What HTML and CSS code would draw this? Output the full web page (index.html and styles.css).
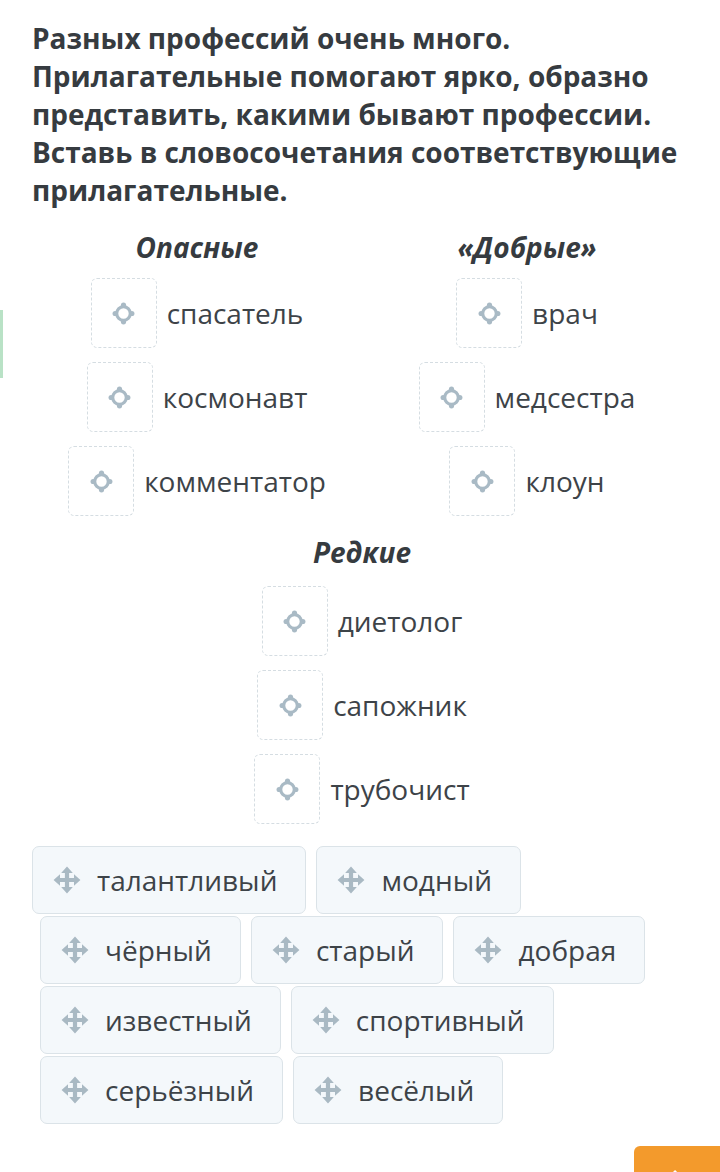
FILE: index.html
```html
<!DOCTYPE html>
<html lang="ru">
<head>
    <meta charset="UTF-8">
    <meta name="viewport" content="width=device-width, initial-scale=1.0">
    <title>Прилагательные</title>
    <link rel="stylesheet" href="styles.css">
</head>
<body>
    <div class="side-mark"></div>
    <main class="task">
        <h1 class="question">Разных профессий очень много. Прилагательные помогают ярко, образно представить, какими бывают профессии. Вставь в словосочетания соответствующие прилагательные.</h1>

        <div class="groups">
            <section class="group">
                <h2>Опасные</h2>
                <div class="row"><span class="drop"><svg class="target" viewBox="0 0 24 24"><use href="#target"/></svg></span><span class="word">спасатель</span></div>
                <div class="row"><span class="drop"><svg class="target" viewBox="0 0 24 24"><use href="#target"/></svg></span><span class="word">космонавт</span></div>
                <div class="row"><span class="drop"><svg class="target" viewBox="0 0 24 24"><use href="#target"/></svg></span><span class="word">комментатор</span></div>
            </section>
            <section class="group">
                <h2>«Добрые»</h2>
                <div class="row"><span class="drop"><svg class="target" viewBox="0 0 24 24"><use href="#target"/></svg></span><span class="word">врач</span></div>
                <div class="row"><span class="drop"><svg class="target" viewBox="0 0 24 24"><use href="#target"/></svg></span><span class="word">медсестра</span></div>
                <div class="row"><span class="drop"><svg class="target" viewBox="0 0 24 24"><use href="#target"/></svg></span><span class="word">клоун</span></div>
            </section>
            <section class="group wide">
                <h2>Редкие</h2>
                <div class="row"><span class="drop"><svg class="target" viewBox="0 0 24 24"><use href="#target"/></svg></span><span class="word">диетолог</span></div>
                <div class="row"><span class="drop"><svg class="target" viewBox="0 0 24 24"><use href="#target"/></svg></span><span class="word">сапожник</span></div>
                <div class="row"><span class="drop"><svg class="target" viewBox="0 0 24 24"><use href="#target"/></svg></span><span class="word">трубочист</span></div>
            </section>
        </div>

        <div class="bank">
            <div class="bank-row first">
                <span class="chip"><svg class="move" viewBox="0 0 24 24"><use href="#move"/></svg>талантливый</span>
                <span class="chip"><svg class="move" viewBox="0 0 24 24"><use href="#move"/></svg>модный</span>
            </div>
            <div class="bank-row">
                <span class="chip"><svg class="move" viewBox="0 0 24 24"><use href="#move"/></svg>чёрный</span>
                <span class="chip"><svg class="move" viewBox="0 0 24 24"><use href="#move"/></svg>старый</span>
                <span class="chip"><svg class="move" viewBox="0 0 24 24"><use href="#move"/></svg>добрая</span>
            </div>
            <div class="bank-row">
                <span class="chip"><svg class="move" viewBox="0 0 24 24"><use href="#move"/></svg>известный</span>
                <span class="chip"><svg class="move" viewBox="0 0 24 24"><use href="#move"/></svg>спортивный</span>
            </div>
            <div class="bank-row">
                <span class="chip"><svg class="move" viewBox="0 0 24 24"><use href="#move"/></svg>серьёзный</span>
                <span class="chip"><svg class="move" viewBox="0 0 24 24"><use href="#move"/></svg>весёлый</span>
            </div>
        </div>

        <div class="footer">
            <button class="next" type="button"><svg viewBox="0 0 24 24"><path d="M9 5l7 7-7 7"/></svg></button>
        </div>
    </main>

    <svg width="0" height="0" style="position:absolute">
        <defs>
            <g id="target">
                <circle cx="12" cy="12" r="6.5" fill="none" stroke="currentColor" stroke-width="3"/>
                <circle cx="12" cy="4" r="2.5" fill="currentColor"/>
                <circle cx="12" cy="20" r="2.5" fill="currentColor"/>
                <circle cx="4" cy="12" r="2.5" fill="currentColor"/>
                <circle cx="20" cy="12" r="2.5" fill="currentColor"/>
            </g>
            <path id="move" d="M12 0.5l5 5.5h-3.2v4.2h4.2v-3.2l5.5 5-5.5 5v-3.2h-4.2v4.2h3.2l-5 5.5-5-5.5h3.2v-4.2h-4.2v3.2l-5.5-5 5.5-5v3.2h4.2v-4.2h-3.2z" fill="currentColor"/>
        </defs>
    </svg>
</body>
</html>
```

FILE: styles.css
```css
body { margin: 0; background: #fff; font-family: "Open Sans", "Noto Sans", sans-serif; color: #3d4348; overflow: hidden; height: 1172px; position: relative; }
.side-mark { position: absolute; left: 0; top: 310px; width: 3px; height: 68px; background: #b9e2c6; }
.task { padding: 19px 20px 0 32px; }
.question { margin: 0; font-size: 28px; line-height: 38px; font-weight: 700; color: #363b40; }

.groups { display: grid; grid-template-columns: 1fr 1fr; margin-top: 20px; margin-right: 8px; }
.group { display: flex; flex-direction: column; align-items: center; gap: 14px; }
.group.wide { grid-column: 1 / 3; margin-top: 18px; }
.group h2 { margin: 0 0 -1px; font-size: 28px; line-height: 36px; font-weight: 700; font-style: italic; color: #363b40; }
.group.wide h2 { margin-bottom: 2px; }
.row { display: flex; align-items: center; gap: 10px; }
.drop { width: 64px; height: 68px; border: 1px dashed #d5dde2; border-radius: 6px; display: flex; align-items: center; justify-content: center; }
.target { width: 25px; height: 25px; color: #a9bac5; }
.word { font-size: 28px; line-height: 38px; color: #3d4348; }

.bank { margin-top: 22px; display: flex; flex-direction: column; gap: 2px; }
.bank-row { display: flex; gap: 10px; padding-left: 8px; }
.bank-row.first { padding-left: 0; }
.chip { display: flex; align-items: center; gap: 16px; height: 68px; padding: 0 28px 0 20px; box-sizing: border-box; border: 1px solid #dbe3e8; border-radius: 7px; background: #f4f8fb; font-size: 28px; color: #3d4348; }
.move { width: 28px; height: 28px; color: #a9b9c3; }

.footer { display: flex; justify-content: flex-end; margin: 22px -20px 0 0; }
.next { width: 86px; height: 56px; border: none; border-radius: 6px 0 0 0; background: #f39a2c; padding: 0; display: flex; justify-content: center; padding-top: 20px; }
.next svg { width: 24px; height: 24px; fill: none; stroke: #fff; stroke-width: 3; }
```
